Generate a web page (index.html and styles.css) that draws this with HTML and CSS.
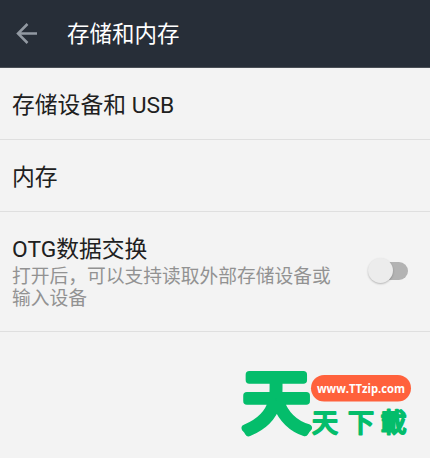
FILE: index.html
```
<!DOCTYPE html>
<html lang="zh-CN">
<head>
    <meta charset="UTF-8">
    <meta name="viewport" content="width=device-width, initial-scale=1.0">
    <title>存储和内存</title>
    <link rel="stylesheet" href="styles.css">
</head>
<body>
    <header class="topbar">
        <svg class="back" width="22" height="22" viewBox="0 0 22 22">
            <path d="M21 10.5H2M11.5 1L2 10.5l9.5 9.5"/>
        </svg>
        <h1>存储和内存</h1>
    </header>

    <ul class="list">
        <li class="item">
            <div class="title">存储设备和 USB</div>
        </li>
        <li class="item">
            <div class="title">内存</div>
        </li>
        <li class="item item-otg">
            <div class="text">
                <div class="title">OTG数据交换</div>
                <p class="summary">打开后，可以支持读取外部存储设备或输入设备</p>
            </div>
            <div class="switch"><span class="thumb"></span></div>
        </li>
    </ul>

    <!-- Logo -->
    <svg class="brand" width="180" height="110" viewBox="0 -24 180 110" lang="zh-TW">
        <text class="brand-big" x="2.5" y="60">天</text>
        <rect class="brand-pill" x="71" y="8" width="100" height="26.5" rx="13.2"/>
        <text class="brand-url" x="77" y="26" textLength="88" lengthAdjust="spacingAndGlyphs">www.TTzip.com</text>
        <text class="brand-name" x="72 108 140.5" y="64.5">天下載</text>
    </svg>
</body>
</html>
```

FILE: styles.css
```
* {
    box-sizing: border-box;
}
body {
    margin: 0;
    height: 458px;
    overflow: hidden;
    background-color: #f3f3f3;
    color: #202020;
    font-family: Roboto, "Noto Sans CJK SC", sans-serif;
}
.topbar {
    display: flex;
    align-items: center;
    height: 68px;
    padding: 0 16px;
    background-color: #272e38;
    border-bottom: 1px solid #4a4f56;
}
.back {
    fill: none;
    stroke: #9299a2;
    stroke-width: 2.5;
}
h1 {
    margin: 0 0 0 29px;
    color: #fff;
    font-size: 22.5px;
    font-weight: 400;
    line-height: 32px;
}
.list {
    margin: 0;
    padding: 0;
    list-style: none;
}
.item {
    display: flex;
    align-items: center;
    height: 72px;
    padding: 5px 22px 0 12px;
    border-bottom: 1px solid #dfdfdf;
}
.item-otg {
    height: 120px;
    padding-top: 2px;
}
.title {
    font-size: 22.8px;
    line-height: 28px;
}
.text {
    width: 326px;
}
.summary {
    margin: 2px 0 0;
    color: #929292;
    font-size: 18.75px;
    line-height: 22px;
}
.switch {
    position: relative;
    width: 37px;
    height: 18px;
    margin: -3px 0 0 auto;
    border-radius: 9px;
    background-color: #b3b3b3;
}
.thumb {
    position: absolute;
    top: -4px;
    left: -3px;
    width: 25px;
    height: 25px;
    border-radius: 50%;
    background-color: #ececec;
    box-shadow: 0 1px 2px rgba(0, 0, 0, 0.25);
}
.brand {
    display: block;
    margin: 11px 0 0 240px;
    overflow: visible;
    font-family: "Noto Sans CJK TC", sans-serif;
}
.brand-big,
.brand-name {
    fill: #04bd6b;
    stroke: #04bd6b;
    stroke-linejoin: round;
}
.brand-big {
    font-size: 68px;
    font-weight: 400;
    stroke-width: 7.5px;
}
.brand-name {
    font-size: 26px;
    font-weight: 400;
    stroke-width: 2.1px;
}
.brand-pill {
    fill: #ff613c;
}
.brand-url {
    fill: #fff;
    font-family: "Open Sans", sans-serif;
    font-size: 13px;
    font-weight: 700;
}
```
